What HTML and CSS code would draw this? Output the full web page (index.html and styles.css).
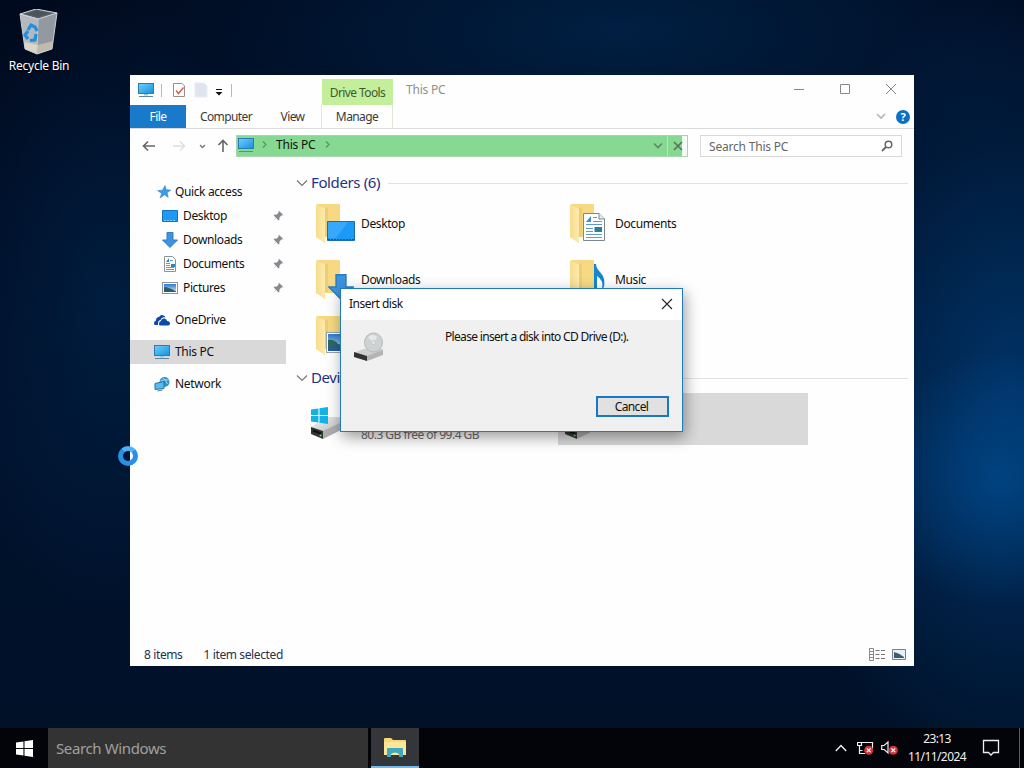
FILE: index.html
```html
<!DOCTYPE html>
<html lang="en">
<head>
<meta charset="UTF-8" />
<meta name="viewport" content="width=device-width, initial-scale=1" />
<title>This PC</title>
<link rel="stylesheet" href="styles.css">
</head>
<body>

<!-- shared icons -->
<svg class="defs" width="0" height="0" aria-hidden="true">
  <defs>
    <linearGradient id="gScreen" x1="0" y1="0" x2="1" y2="1">
      <stop offset="0" stop-color="#6fd0fb" /><stop offset="1" stop-color="#1490df" />
    </linearGradient>
    <linearGradient id="gFolder" x1="0" y1="0" x2="1" y2="0">
      <stop offset="0" stop-color="#f7dc8c" /><stop offset="1" stop-color="#fdeaae" />
    </linearGradient>
    <linearGradient id="gDisk" x1="0" y1="0" x2="1" y2="1">
      <stop offset="0" stop-color="#f4f4f4" /><stop offset="1" stop-color="#a9a9a9" />
    </linearGradient>
    <linearGradient id="gSky" x1="0" y1="0" x2="0" y2="1">
      <stop offset="0" stop-color="#2f78cf" /><stop offset="1" stop-color="#cfe6f4" />
    </linearGradient>
    <symbol id="pc" viewBox="0 0 18 16">
      <rect x="1.5" y="1.5" width="15" height="10" fill="url(#gScreen)" stroke="#2a7cb5" />
      <path d="M7 12h4v1.500h-4z" fill="#9cc3da" />
      <path d="M2 14.500h14" stroke="#5a87a5" />
    </symbol>
    <symbol id="folder" viewBox="0 0 28 42">
      <path d="M2 1h22q1 0 1 1v32H9z" fill="#f6d982" />
      <path d="M1 1.500l9 4v35l-2.500-2L1 34z" fill="url(#gFolder)" />
      <path d="M10 5.500l3-1.500v29l-3 1z" fill="#efcd72" />
    </symbol>
    <symbol id="downArrow" viewBox="0 0 16 16">
      <path d="M5 0.500h6V8h4.500L8 15.500 0.500 8H5z" fill="#3d93dd" stroke="#2f7fc6" />
    </symbol>
    <symbol id="doc" viewBox="0 0 22 28">
      <path d="M.5.500h15.500l5.500 5.500v21.500H.5z" fill="#fff" stroke="#7d8790" />
      <path d="M16 .5V6h5.500" fill="#e6eaee" stroke="#7d8790" />
      <path d="M3 9l5-6v6z" fill="#3b8fd0" />
      <path d="M10 4.500h4M10 8.500h9M3 11.500h16M3 15.500h7M3 18.500h7M3 21.500h16M3 24.500h16" stroke="#5d9cc9" />
      <path d="M11.500 14h7.500v5h-7.500z" fill="#2f7c9c" />
    </symbol>
    <symbol id="picture" viewBox="0 0 16 12">
      <rect x=".5" y=".5" width="15" height="11" fill="#fff" stroke="#8b9299" />
      <rect x="2" y="2" width="12" height="8" fill="url(#gSky)" />
      <path d="M2 5q5 0 12 4.500v.5H2z" fill="#315c66" />
    </symbol>
    <symbol id="photo" viewBox="0 0 28 21">
      <rect x=".5" y=".5" width="27" height="20" fill="#fff" stroke="#9aa2aa" />
      <rect x="2" y="2" width="24" height="17" fill="url(#gSky)" />
      <path d="M2 8q6-1 10 4l14 3v4H2z" fill="#2c6a5c" />
      <path d="M2 15q9-2 24 1v3H2z" fill="#2a5da0" />
    </symbol>
    <symbol id="pin" viewBox="0 0 12 12">
      <path d="M7 .8l4.200 4.200-1.200.6-.6-.1L7.300 7.700l.2 1.700-1 1L4.200 8 .8 11.200 4 7.800 1.600 5.500l1-1 1.800.2 2.200-2.200-.1-.6z" fill="#858a90" />
    </symbol>
    <symbol id="drive" viewBox="0 0 40 26">
      <path d="M1 13L17 3h22v5L12 24 1 19z" fill="url(#gDisk)" />
      <path d="M1 13l12 4v8L1 20z" fill="#343434" />
      <path d="M13 17L39 5v7L13 25z" fill="#adadad" />
      <path d="M3 16.500l8 3" stroke="#111" stroke-width="2" />
      <circle cx="10.500" cy="21.500" r="1" fill="#6fdc6f" />
    </symbol>
    <symbol id="winlogo" viewBox="0 0 16 16">
      <path d="M0 2.300L7 1.300v6.200H0zM8 1.200L16 0v7.500H8zM0 8.500h7v6.200l-7-1zM8 8.500h8V16l-8-1.200z" />
    </symbol>
    <symbol id="chevron" viewBox="0 0 12 8">
      <path d="M1 1.500l5 5 5-5" fill="none" stroke="currentColor" stroke-width="1.200" />
    </symbol>
    <symbol id="redX" viewBox="0 0 10 10">
      <circle cx="5" cy="5" r="4.800" fill="#d8323c" />
      <path d="M3 3l4 4M7 3L3 7" stroke="#fff" stroke-width="1.300" />
    </symbol>
  </defs>
</svg>

<div class="desktop">
  <div class="desktop-icon">
    <svg width="40" height="46" viewBox="0 0 40 46">
      <path d="M1 5L19 10l-1 35L6 40z" fill="#b3b9bf" />
      <path d="M19 10l19-6-5 36-15 5z" fill="#9299a0" />
      <path d="M1 5L17 0l21 4-19 6z" fill="#56616a" stroke="#d6dade" />
      <path d="M7 5l11-3.500 13 2.500-12 4z" fill="#4a545c" />
      <path d="M5 33l14 3-1 9-12-5z" fill="#dcd6c6" />
      <path d="M19 36l15-4-1 8-15 5z" fill="#c0bbad" />
      <path d="M1 5l18 5-1 35M38 4l-5 36-15 5L6 40 1 5" fill="none" stroke="#c9ced3" />
      <path d="M9 21l3-5 4 2 2 4M17 25l-1 6-5 .5M9 30l-3-4 3-4" fill="none" stroke="#218fe0" stroke-width="3.200" />
    </svg>
    <span>Recycle Bin</span>
  </div>

  <div class="window">
    <div class="titlebar">
      <div class="quickbar">
        <svg class="qb-pc" width="18" height="16"><use href="#pc" /></svg>
        <i class="sep"></i>
        <svg class="qb-check" width="14" height="16" viewBox="0 0 14 16">
          <path d="M1.500 1.500h8.500l2.500 2.500v10.500h-11z" fill="#fff" stroke="#9b8d8d" />
          <path d="M4 8.500l2.500 3 5-6" fill="none" stroke="#cf6848" stroke-width="1.500" />
        </svg>
        <svg class="qb-new" width="14" height="16" viewBox="0 0 14 16"><path d="M1 1h9l3 3v11H1z" fill="#dfe4ee" stroke="#e9ecf2" /></svg>
        <svg class="qb-drop" width="8" height="8" viewBox="0 0 8 8"><path d="M1 1.500h6" stroke="#111" /><path d="M.5 4h7L4 7.500z" fill="#111" /></svg>
        <i class="sep"></i>
      </div>
      <div class="drive-tools">Drive Tools</div>
      <div class="title">This PC</div>
      <div class="controls">
        <svg width="12" height="12" viewBox="0 0 12 12"><path d="M1 6.500h10" stroke="#888" /></svg>
        <svg width="12" height="12" viewBox="0 0 12 12"><path d="M1.500 1.500h9v9h-9z" fill="none" stroke="#888" /></svg>
        <svg width="12" height="12" viewBox="0 0 12 12"><path d="M1 1l10 10M11 1L1 11" stroke="#888" /></svg>
      </div>
    </div>

    <div class="tabs">
      <span class="tab file">File</span>
      <span class="tab computer">Computer</span>
      <span class="tab view">View</span>
      <span class="tab manage">Manage</span>
      <svg class="tabs-chevron" width="10" height="7" viewBox="0 0 10 7"><path d="M1 1l4 4 4-4" fill="none" stroke="#b5b5b5" stroke-width="1.600" /></svg>
      <span class="help">?</span>
    </div>

    <div class="address-row">
      <svg width="14" height="12" viewBox="0 0 14 12"><path d="M13 6H1.500M6 1.500L1.500 6 6 10.500" fill="none" stroke="#666" stroke-width="1.600" /></svg>
      <svg class="forward" width="14" height="12" viewBox="0 0 14 12"><path d="M1 6h11.500M8 1.500L12.500 6 8 10.500" fill="none" stroke="#dedede" stroke-width="1.400" /></svg>
      <svg class="recent" width="7" height="5" viewBox="0 0 7 5"><path d="M1 1l2.500 2.500L6 1" fill="none" stroke="#777" stroke-width="1.300" /></svg>
      <svg class="up" width="12" height="14" viewBox="0 0 12 14"><path d="M6 13V1.500M1.500 6L6 1.500 10.500 6" fill="none" stroke="#666" stroke-width="1.600" /></svg>
      <div class="address">
        <div class="crumbs">
          <svg class="crumb-pc" width="18" height="16"><use href="#pc" /></svg>
          <svg class="crumb-arrow" width="5" height="7" viewBox="0 0 5 7"><path d="M1 .5l3 3-3 3" fill="none" stroke="#5c8f66" stroke-width="1.200" /></svg>
          <span>This PC</span>
          <svg class="crumb-arrow" width="5" height="7" viewBox="0 0 5 7"><path d="M1 .5l3 3-3 3" fill="none" stroke="#5c8f66" stroke-width="1.200" /></svg>
        </div>
        <svg class="addr-chevron" width="10" height="8" viewBox="0 0 10 8"><path d="M1 1.500l4 4 4-4" fill="none" stroke="#62846a" stroke-width="1.600" /></svg>
        <div class="stop"><svg width="10" height="10" viewBox="0 0 10 10"><path d="M1 1l8 8M9 1L1 9" stroke="#55705b" stroke-width="1.600" /></svg></div>
      </div>
      <div class="search">
        <span>Search This PC</span>
        <svg width="12" height="12" viewBox="0 0 12 12"><circle cx="7.500" cy="4.500" r="3.300" fill="none" stroke="#666" stroke-width="1.500" /><path d="M5 7L1 11" stroke="#666" stroke-width="1.800" /></svg>
      </div>
    </div>

    <div class="main">
      <div class="sidebar">
        <div class="side-item">
          <svg width="14" height="14" viewBox="0 0 14 14"><path d="M8 .5l1.400 4.200 4.400.4-3.500 2.700.9 4.700-3.700-2.700L3 13l1.600-4.500L.5 5.600l4.900-.4z" fill="#3a9be6" stroke="#2b84c9" stroke-width=".5" /></svg>
          <span>Quick access</span>
        </div>
        <div class="side-item sub">
          <svg width="16" height="12" viewBox="0 0 16 12"><path d="M.5.500h15v11H.5z" fill="#1e9af5" stroke="#1573bd" /><path d="M2 10.500h12" stroke="#85cdf9" stroke-dasharray="2 1" /></svg>
          <span>Desktop</span>
          <svg class="pin" width="12" height="12"><use href="#pin" /></svg>
        </div>
        <div class="side-item sub">
          <svg width="16" height="16"><use href="#downArrow" /></svg>
          <span>Downloads</span>
          <svg class="pin" width="12" height="12"><use href="#pin" /></svg>
        </div>
        <div class="side-item sub">
          <svg width="16" height="16" viewBox="0 0 16 16"><path d="M2.500.500h8l3 3v12h-11z" fill="#fff" stroke="#8b9299" /><path d="M4 6l3-4v4zM9 8h4v3H9z" fill="#2f83b8" /><path d="M8 4.500h3M4 7.500h4M4 9.500h4M4 11.500h8M4 13.500h8" stroke="#5d9cc9" /></svg>
          <span>Documents</span>
          <svg class="pin" width="12" height="12"><use href="#pin" /></svg>
        </div>
        <div class="side-item sub">
          <svg width="16" height="12"><use href="#picture" /></svg>
          <span>Pictures</span>
          <svg class="pin" width="12" height="12"><use href="#pin" /></svg>
        </div>
        <div class="side-item root">
          <svg width="17" height="12" viewBox="0 0 17 12"><path d="M1 11q-1.500-3 1.500-4.500Q2.500 3 5.500 3 7.500 0 10 1.500q1.500.5 2 2-4-1-5 2.500-3 .5-2.500 5z" fill="#0c4aa5" /><path d="M6 11.500q-1.500-3.500 1.500-4.500.5-3 3.500-2.500 2.500.5 2.500 2.500 3 .3 3 2.500 0 2-2 2z" fill="#0c4aa5" /></svg>
          <span>OneDrive</span>
        </div>
        <div class="side-item root selected">
          <svg width="18" height="16"><use href="#pc" /></svg>
          <span>This PC</span>
        </div>
        <div class="side-item root">
          <svg width="17" height="16" viewBox="0 0 17 16"><circle cx="11" cy="6" r="5" fill="#3790c9" /><path d="M9 2q3 1 5 6M7 5q4-2 8-1" stroke="#a5dcf5" fill="none" /><path d="M1.500 7.500l9-2v7l-9 1z" fill="#54bbf0" stroke="#2572a4" /><path d="M4 15l5-1" stroke="#52809c" /></svg>
          <span>Network</span>
        </div>
      </div>

      <div class="content">
        <div class="group-title">
          <svg width="12" height="8"><use href="#chevron" /></svg>
          <h2>Folders (6)</h2>
          <hr>
        </div>
        <div class="tiles">
          <div class="tile">
            <div class="tile-icon">
              <svg width="28" height="42"><use href="#folder" /></svg>
              <svg class="overlay desktop-mark" width="28" height="20" viewBox="0 0 28 20"><path d="M.5.500h27v19H.5z" fill="#1b9af7" stroke="#176fae" /><path d="M1 1h20L9 17H1z" fill="#37a8fa" /><path d="M1 18.500h26" stroke="#0d5b99" stroke-dasharray="2 1" /></svg>
            </div>
            <span>Desktop</span>
          </div>
          <div class="tile">
            <div class="tile-icon">
              <svg width="28" height="42"><use href="#folder" /></svg>
              <svg class="overlay doc-mark" width="22" height="28"><use href="#doc" /></svg>
            </div>
            <span>Documents</span>
          </div>
          <div class="tile">
            <div class="tile-icon">
              <svg width="28" height="42"><use href="#folder" /></svg>
              <svg class="overlay down-mark" width="26" height="26"><use href="#downArrow" /></svg>
            </div>
            <span>Downloads</span>
          </div>
          <div class="tile">
            <div class="tile-icon">
              <svg width="28" height="42"><use href="#folder" /></svg>
              <svg class="overlay music-mark" width="14" height="28" viewBox="0 0 14 28"><path d="M1 0h2q0 4 4 8 7 7 3 18-1.500 0-1 0 2-10-5-14v14H1z" fill="#1287d2" /></svg>
            </div>
            <span>Music</span>
          </div>
          <div class="tile">
            <div class="tile-icon">
              <svg width="28" height="42"><use href="#folder" /></svg>
              <svg class="overlay pic-mark" width="28" height="21"><use href="#photo" /></svg>
            </div>
          </div>
        </div>

        <div class="group-title devices">
          <svg width="12" height="8"><use href="#chevron" /></svg>
          <h2>Devices and drives (2)</h2>
          <hr>
        </div>
        <div class="tiles">
          <div class="tile disk">
            <div class="tile-icon">
              <svg class="drive" width="40" height="26"><use href="#drive" /></svg>
              <svg class="overlay win-mark" width="17" height="17"><use href="#winlogo" /></svg>
            </div>
            <span class="free">80.3 GB free of 99.4 GB</span>
          </div>
          <div class="tile disk selected">
            <div class="tile-icon">
              <svg class="drive" width="40" height="26"><use href="#drive" /></svg>
            </div>
          </div>
        </div>
      </div>
    </div>

    <div class="statusbar">
      <span class="count">8 items</span>
      <span class="picked">1 item selected</span>
      <svg class="details" width="17" height="13" viewBox="0 0 17 13"><path d="M.5.500h4v12h-4zM0 3.500h5M0 6.500h5M0 9.500h5" fill="none" stroke="#888" /><path d="M6.500 2.500h4M12 2.500h4M6.500 6.500h4M12 6.500h4M6.500 10.500h4M12 10.500h4" stroke="#777" /></svg>
      <svg width="14" height="11" viewBox="0 0 14 11"><path d="M.5.500h13v10H.5z" fill="#e8f1f8" stroke="#6f8295" /><path d="M2 3q5 1 10 5v1H2z" fill="#3f5b70" /></svg>
    </div>
  </div>

  <div class="dialog">
    <div class="dialog-title">
      <span>Insert disk</span>
      <svg width="12" height="12" viewBox="0 0 12 12"><path d="M1 1l10 10M11 1L1 11" stroke="#222" stroke-width="1.100" /></svg>
    </div>
    <div class="dialog-body">
      <svg class="dialog-icon" width="30" height="30" viewBox="0 0 30 30">
        <path d="M0 21l9-4h20v5l-16 7L0 25z" fill="#cfcfcf" />
        <path d="M13 24l16-6v5l-16 6z" fill="#b4b4b4" />
        <path d="M0 20l13 4v5L0 25z" fill="#333" />
        <ellipse cx="19.500" cy="10.500" rx="9" ry="9.500" fill="#cdd2d2" stroke="#b4b9b9" />
        <path d="M14 5q5-4 9 0l-4 6z" fill="#e6eaea" />
        <circle cx="19.500" cy="10.500" r="2" fill="#e4e8e8" stroke="#c4caca" />
      </svg>
      <p>Please insert a disk into CD Drive (D:).</p>
    </div>
    <div class="dialog-actions">
      <button>Cancel</button>
    </div>
  </div>

  <div class="busy"></div>

  <div class="taskbar">
    <div class="start"><svg width="17" height="17"><use href="#winlogo" /></svg></div>
    <div class="task-search">Search Windows</div>
    <div class="task-app">
      <svg width="22" height="19" viewBox="0 0 22 19">
        <path d="M0 1q0-1 1-1h6l2 2h12q1 0 1 1v14H0z" fill="#f7d875" />
        <path d="M0 4h22v13H0z" fill="#fde69a" />
        <path d="M3 11q0-1 1-1h14q1 0 1 1v8h-4v-3q-4-3-8 0v3H3z" fill="#3fa9bf" />
      </svg>
    </div>
    <div class="tray">
      <svg width="12" height="8" viewBox="0 0 12 8"><path d="M.8 7L6 1.500 11.200 7" fill="none" stroke="#eee" stroke-width="1.400" /></svg>
      <svg class="net" width="17" height="14" viewBox="0 0 17 14"><path d="M5 1.500h10.500v7H8M.5 1.500h4v3h-4zM2.500 5v7.500H8M2.500 9.500h3" fill="none" stroke="#eee" stroke-width="1.200" /><use href="#redX" x="7" y="4.500" width="9.500" height="9.500" /></svg>
      <svg class="sound" width="17" height="14" viewBox="0 0 17 14"><path d="M.7 4.500h2.500L7 1v11L3.200 8.500H.7z" fill="none" stroke="#eee" stroke-width="1.200" /><use href="#redX" x="7.500" y="4.500" width="9.500" height="9.500" /></svg>
      <div class="clock"><span>23:13</span><span>11/11/2024</span></div>
      <svg class="notify" width="18" height="18" viewBox="0 0 18 18"><path d="M1.500 1.500h15v12h-5L9 16l-2.500-2.500h-5z" fill="none" stroke="#eee" stroke-width="1.300" /></svg>
    </div>
  </div>
</div>

</body>
</html>
```
FILE: styles.css
```css
* {
  box-sizing: border-box;
}
body {
  margin: 0;
  font-family: "Noto Sans", "Open Sans", sans-serif;
  font-size: 12px;
  letter-spacing: -0.38px;
  color: #111;
  overflow: hidden;
}
svg {
  display: block;
  flex: none;
}
.defs {
  position: absolute;
}
.desktop {
  position: relative;
  width: 1024px;
  height: 768px;
  overflow: hidden;
  background:
    radial-gradient(ellipse 130px 130px at 1000px 480px, rgba(0, 82, 155, 0.6), rgba(0, 60, 120, 0) 100%),
    radial-gradient(ellipse 240px 400px at 1010px 390px, rgba(0, 62, 122, 0.75), rgba(0, 40, 90, 0) 100%),
    radial-gradient(ellipse 520px 170px at 620px 30px, rgba(0, 38, 78, 0.75), rgba(0, 26, 60, 0) 100%),
    radial-gradient(ellipse 170px 320px at 110px 300px, rgba(0, 36, 76, 0.65), rgba(0, 24, 50, 0) 100%),
    linear-gradient(#000a1e, #00122c 60%, #001128);
}
.desktop-icon {
  position: absolute;
  left: 1px;
  top: 9px;
  width: 76px;
  display: flex;
  flex-direction: column;
  align-items: center;
  gap: 3px;
  color: #fff;
  line-height: 16px;
  letter-spacing: -0.25px;
  text-shadow: 0 1px 2px #000;
}

/* explorer window */
.window {
  position: absolute;
  left: 130px;
  top: 75px;
  width: 784px;
  height: 591px;
  background: #fefefe;
  display: flex;
  flex-direction: column;
}
.titlebar {
  height: 30px;
  display: flex;
  flex: none;
}
.quickbar {
  width: 192px;
  padding-left: 7px;
  display: flex;
  align-items: center;
}
.sep {
  width: 1px;
  height: 13px;
  background: #b9b9b9;
}
.qb-pc {
  margin-right: 6px;
}
.qb-check {
  margin-left: 10px;
}
.qb-new {
  margin-left: 8px;
}
.qb-drop {
  margin: 3px 8px 0 7px;
}
.drive-tools {
  width: 71px;
  margin-top: 4px;
  background: #c3ee9a;
  color: #3d5a35;
  text-align: center;
  line-height: 27px;
  letter-spacing: -0.6px;
}
.title {
  flex: 1;
  padding-left: 13px;
  line-height: 30px;
  letter-spacing: -0.2px;
  color: #8f8f8f;
}
.controls {
  display: flex;
  gap: 34px;
  padding: 8px 17px 0 0;
}
.tabs {
  height: 24px;
  flex: none;
  display: flex;
  align-items: center;
  border-bottom: 1px solid #dadbdc;
  line-height: 24px;
  letter-spacing: -0.6px;
  color: #3a3a3a;
}
.tab {
  height: 23px;
  text-align: center;
}
.file {
  width: 56px;
  background: #1979ca;
  color: #fff;
}
.computer {
  width: 80px;
}
.view {
  width: 53px;
}
.manage {
  width: 72px;
  margin-left: 2px;
  border: solid #dfe6da;
  border-width: 0 1px;
}
.tabs-chevron {
  margin-left: auto;
}
.help {
  width: 14px;
  height: 14px;
  margin: 0 4px 0 10px;
  border-radius: 50%;
  background: #0b6fc6;
  color: #fff;
  font-size: 11px;
  font-weight: bold;
  line-height: 14px;
  letter-spacing: 0;
  text-align: center;
}
.address-row {
  height: 34px;
  flex: none;
  display: flex;
  align-items: center;
  padding: 0 12px;
  letter-spacing: -0.2px;
}
.forward {
  margin-left: 16px;
}
.recent {
  margin-left: 13px;
}
.up {
  margin-left: 11px;
}
.address {
  width: 452px;
  height: 22px;
  margin-left: 7px;
  display: flex;
  align-items: center;
  background: #86d991;
  border: 1px solid #a9d5ae;
}
.crumbs {
  flex: 1;
  display: flex;
  align-items: center;
  padding-bottom: 3px;
  line-height: 18px;
}
.crumbs span {
  margin: 0 9px;
}
.crumb-pc + .crumb-arrow {
  margin-left: 7px;
}
.addr-chevron {
  margin-right: 4px;
}
.stop {
  width: 20px;
  height: 20px;
  padding: 5px 0 0 5px;
  border-left: 1px solid #b4e6ba;
  background: linear-gradient(to right, #86d991 14px, #f4fbf4 14px);
}
.search {
  width: 202px;
  height: 22px;
  margin-left: 12px;
  padding: 0 8px 0 8px;
  display: flex;
  align-items: center;
  justify-content: space-between;
  border: 1px solid #d9d9d9;
  background: #fff;
  color: #666;
}
.main {
  flex: 1;
  display: flex;
  min-height: 0;
}
.sidebar {
  width: 156px;
  padding-top: 17px;
}
.side-item {
  height: 24px;
  display: flex;
  align-items: center;
  gap: 4px;
  padding-left: 27px;
}
.side-item span,
.tile > span {
  padding-bottom: 1px;
}
.side-item.sub {
  padding-left: 32px;
  gap: 5px;
}
.side-item.root {
  margin-top: 8px;
  padding-left: 23px;
  letter-spacing: -0.3px;
}
.side-item.root svg {
  width: 18px;
}
.side-item.selected {
  background: #d9d9d9;
}
.side-item .pin {
  margin: 0 2px 0 auto;
}
.content {
  flex: 1;
  padding: 9px 6px 0 10px;
}
.group-title {
  display: flex;
  align-items: center;
  height: 22px;
  color: #777;
}
.group-title h2 {
  margin: 0 8px 0 3px;
  padding-bottom: 2px;
  font-size: 15px;
  font-weight: normal;
  color: #1e3287;
  white-space: nowrap;
}
.group-title hr {
  flex: 1;
  margin: 0;
  border: 0;
  border-top: 1px solid #e2e2e2;
}
.devices {
  margin-top: 5px;
}
.tiles {
  display: grid;
  grid-template-columns: 250px 250px;
  grid-auto-rows: 52px;
  gap: 4px;
  margin: 4px 0 0 8px;
}
.tile {
  display: flex;
  align-items: center;
}
.tile-icon {
  position: relative;
  width: 57px;
  height: 42px;
  padding-left: 11px;
}
.overlay {
  position: absolute;
}
.desktop-mark {
  left: 23px;
  top: 18px;
}
.doc-mark {
  left: 25px;
  top: 10px;
}
.down-mark {
  left: 24px;
  top: 15px;
}
.music-mark {
  left: 35px;
  top: 5px;
}
.pic-mark {
  left: 22px;
  top: 17px;
}
.disk .tile-icon {
  padding: 16px 0 0 6px;
}
.win-mark {
  left: 7px;
  top: 9px;
  fill: #14b1e8;
}
.tile > .free {
  align-self: flex-end;
  margin-bottom: 2px;
  padding: 0;
  line-height: 16px;
  letter-spacing: -0.52px;
  color: #6d6d6d;
}
.tile.selected {
  background: #d9d9d9;
}
.statusbar {
  height: 23px;
  flex: none;
  display: flex;
  align-items: center;
  padding: 0 8px 0 14px;
  color: #24324f;
}
.picked {
  margin-left: 21px;
}
.details {
  margin: 0 6px 0 auto;
}

/* insert disk dialog */
.dialog {
  position: absolute;
  left: 340px;
  top: 288px;
  width: 343px;
  height: 144px;
  border: 1px solid #1e7bbf;
  background: #f0f0f0;
  box-shadow: 2px 5px 14px rgba(0, 0, 0, 0.4);
  display: flex;
  flex-direction: column;
}
.dialog-title {
  height: 31px;
  background: #fff;
  display: flex;
  align-items: center;
  justify-content: space-between;
  padding: 0 9px 2px 8px;
  letter-spacing: -0.5px;
}
.dialog-body {
  flex: 1;
  display: flex;
  padding: 12px 0 0 13px;
}
.dialog-body p {
  margin: -4px 0 0 61px;
  line-height: 18px;
  letter-spacing: -0.68px;
}
.dialog-actions {
  display: flex;
  justify-content: flex-end;
  padding: 0 13px 14px 0;
}
.dialog button {
  width: 73px;
  height: 21px;
  padding: 0 2px 0 0;
  border: 2px solid #1a78c2;
  background: #e1e1e1;
  font: inherit;
  color: #111;
  line-height: 18px;
  letter-spacing: -0.65px;
}
.busy {
  position: absolute;
  left: 118px;
  top: 446px;
  width: 20px;
  height: 20px;
  border: 5px solid #2791e6;
  border-top-color: #4fb0f5;
  border-radius: 50%;
}

/* taskbar */
.taskbar {
  position: absolute;
  left: 0;
  bottom: 0;
  width: 1024px;
  height: 40px;
  display: flex;
  background: #02040a;
  color: #f0f0f0;
}
.start {
  width: 48px;
  display: flex;
  align-items: center;
  justify-content: center;
  fill: #fff;
}
.task-search {
  width: 320px;
  padding-left: 8px;
  background: #333;
  color: #a0a0a0;
  font-size: 15px;
  line-height: 41px;
}
.task-app {
  width: 48px;
  margin-left: 3px;
  display: flex;
  align-items: center;
  justify-content: center;
  background: #34363a;
  border-bottom: 2px solid #76b9ed;
}
.tray {
  flex: 1;
  display: flex;
  align-items: center;
  justify-content: flex-end;
  padding-right: 24px;
  position: relative;
}
.tray::after {
  content: '';
  position: absolute;
  right: 4px;
  top: 0;
  width: 1px;
  height: 40px;
  background: #5a5d63;
}
.net {
  margin-left: 10px;
}
.sound {
  margin-left: 7px;
}
.clock {
  width: 78px;
  display: flex;
  flex-direction: column;
  align-items: center;
  line-height: 18px;
  letter-spacing: -0.6px;
}
.notify {
  margin-left: 6px;
}
```
